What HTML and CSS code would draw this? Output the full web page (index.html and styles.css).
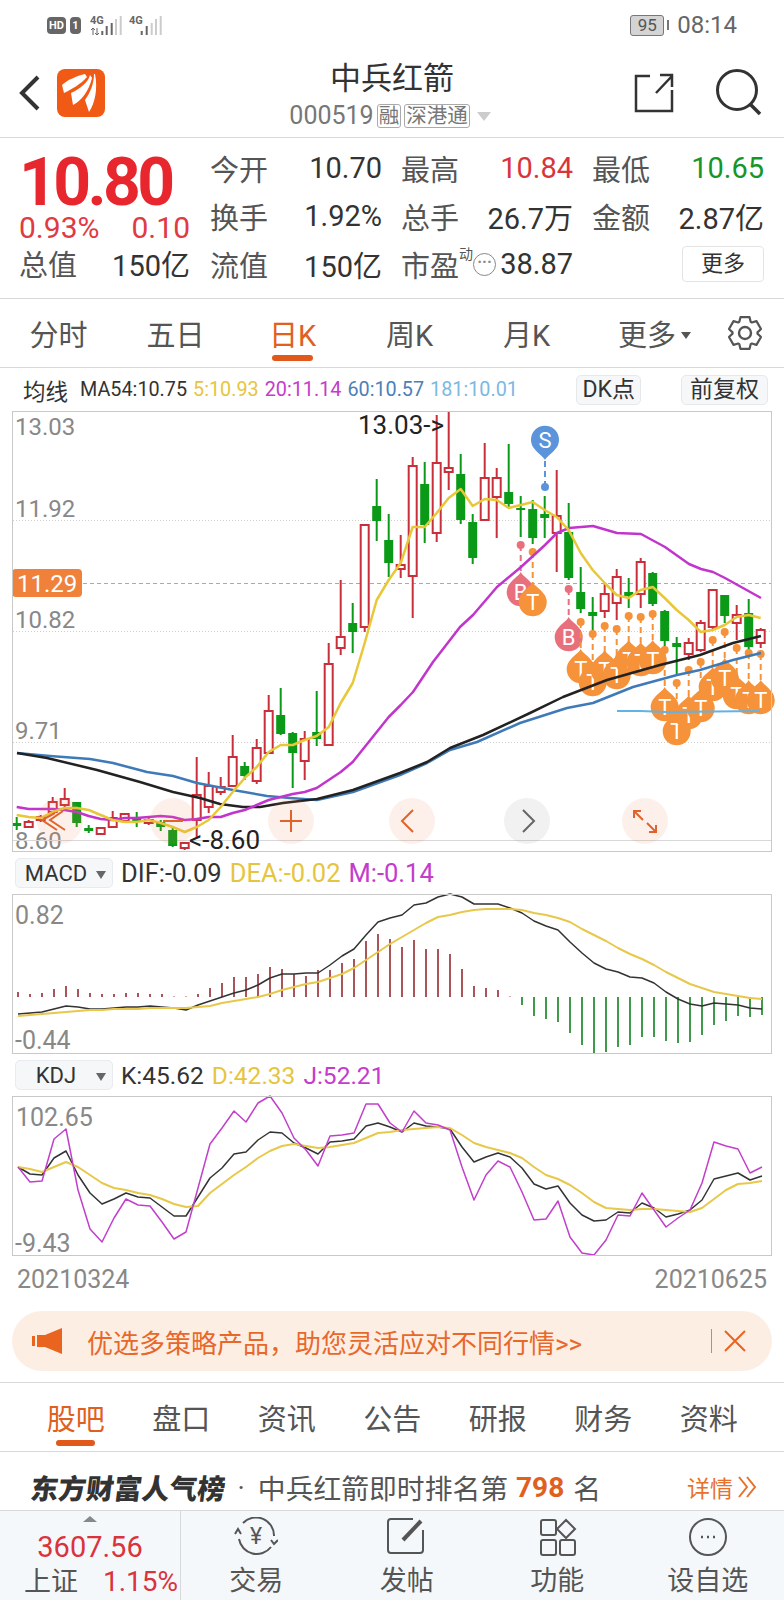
FILE: index.html
```html
<!DOCTYPE html>
<html lang="zh-CN">
<head>
  <meta charset="UTF-8" />
  <meta name="viewport" content="width=device-width, initial-scale=1.0"/>
  <title>中兵红箭 000519</title>
  <link rel="stylesheet" href="styles.css">
</head>
<body>

  <div class="status-bar">
    <span class="hd-badge">HD</span>
    <span class="sim-badge">1</span>
    <svg class="signal" width="33" height="20" viewBox="0 0 33 20">
      <text x="0" y="9" class="signal-text">4G</text>
      <path d="M3 13v7M1 15l2-2 2 2M7 13v7M5 18l2 2 2-2" fill="none" stroke="#666" stroke-width="1"/>
      <path d="M12.3 16v4M16.7 11v9M21.7 8v12" stroke="#666" stroke-width="2"/>
      <path d="M26 4v16M30.7 1v19" stroke="#ccc" stroke-width="2"/>
    </svg>
    <svg class="signal" width="34" height="20" viewBox="0 0 34 20">
      <text x="0" y="9" class="signal-text">4G</text>
      <path d="M12.7 16v4M17.7 11v9" stroke="#666" stroke-width="2"/>
      <path d="M22.7 8v12M27 4v16M31.7 1v19" stroke="#ccc" stroke-width="2"/>
    </svg>
    <div class="status-right">
      <span class="battery">95</span>
      <span class="battery-nub"></span>
      <span class="clock">08:14</span>
    </div>
  </div>

  <header class="top-bar">
    <div class="top-left">
      <svg width="24" height="38" viewBox="0 0 24 38"><path d="M20 3 4 19l16 16" fill="none" stroke="#333" stroke-width="4"/></svg>
      <svg class="logo" width="48" height="48" viewBox="0 0 48 48">
        <rect width="48" height="48" rx="8" fill="#f15a14"/>
        <path d="M28 5C20 7 10 11 5 16l2 8C15 20 24 15 30 8z" fill="#fff"/>
        <path d="M33 6C31 14 22 20 14 24l2 12C24 32 32 22 35 9z" fill="#fff"/>
        <path d="M37 5C37 15 33 24 28 31l4 12C38 34 41 20 38 5z" fill="#fff"/>
      </svg>
    </div>
    <div class="top-title">
      <div class="stock-name">中兵红箭</div>
      <div class="stock-code">
        000519<span class="code-tag">融</span><span class="code-tag">深港通</span><span class="code-arrow"></span>
      </div>
    </div>
    <div class="top-right">
      <svg width="40" height="40" viewBox="0 0 40 40"><path d="M16 3H2v35h36V17M22 20 38 3M26 2h12v12" fill="none" stroke="#333" stroke-width="2.5"/></svg>
      <svg width="48" height="48" viewBox="0 0 48 48"><circle cx="23" cy="21" r="19.5" fill="none" stroke="#333" stroke-width="3"/><path d="M36 35l10 10" stroke="#333" stroke-width="3.5"/></svg>
    </div>
  </header>

  <section class="quote">
    <div class="price-col">
      <div class="price">10.80</div>
      <div class="price-change"><span>0.93%</span><span>0.10</span></div>
      <div class="stat stat-total"><span class="stat-label">总值</span><span>150亿</span></div>
    </div>
    <div class="stats">
      <div class="stat"><span class="stat-label">今开</span><span>10.70</span></div>
      <div class="stat"><span class="stat-label">最高</span><span class="up">10.84</span></div>
      <div class="stat"><span class="stat-label">最低</span><span class="down">10.65</span></div>
      <div class="stat"><span class="stat-label">换手</span><span>1.92%</span></div>
      <div class="stat"><span class="stat-label">总手</span><span>26.7万</span></div>
      <div class="stat"><span class="stat-label">金额</span><span>2.87亿</span></div>
      <div class="stat"><span class="stat-label">流值</span><span>150亿</span></div>
      <div class="stat">
        <span class="stat-label pe-label">市盈<sup>动</sup></span>
        <span class="pe-dots">···</span>
        <span>38.87</span>
      </div>
      <div class="stat stat-btn"><span class="more-btn">更多</span></div>
    </div>
  </section>

  <nav class="period-tabs">
    <span>分时</span>
    <span>五日</span>
    <span class="active">日K</span>
    <span>周K</span>
    <span>月K</span>
    <span class="tab-more">更多<i class="tab-arrow"></i></span>
    <svg class="gear" width="36" height="36" viewBox="0 0 36 36">
      <path d="M12.33 6.86 13.45 2.14H22.55L23.67 6.86 24.81 7.52 29.46 6.13 34.01 14.01 30.48 17.35V18.65L34.01 21.99 29.46 29.87 24.81 28.48 23.67 29.14 22.55 33.86H13.45L12.33 29.14 11.19 28.48 6.54 29.87 1.99 21.99 5.52 18.65V17.35L1.99 14.01 6.54 6.13 11.19 7.52Z" fill="none" stroke="#555" stroke-width="2.2" stroke-linejoin="round"/>
      <circle cx="18" cy="18" r="6" fill="none" stroke="#555" stroke-width="2.4"/>
    </svg>
  </nav>

  <div class="ma-row">
    <span class="ma-title">均线</span>
    <span class="ma-item">MA54:10.75</span>
    <span class="ma-item c-yellow">5:10.93</span>
    <span class="ma-item c-purple">20:11.14</span>
    <span class="ma-item c-blue">60:10.57</span>
    <span class="ma-item c-sky">181:10.01</span>
    <span class="chip chip-dk">DK点</span>
    <span class="chip">前复权</span>
  </div>

  <svg id="kline" class="chart kline-chart" viewBox="12 411 760 441">
    <text x="15" y="435" class="axis">13.03</text>
    <text x="15" y="517" class="axis">11.92</text>
    <text x="15" y="628" class="axis">10.82</text>
    <text x="15" y="739" class="axis">9.71</text>
    <text x="15" y="849" class="axis">8.60</text>
  </svg>

  <div class="indicator-row macd-row">
    <span class="indicator-select">MACD<i class="select-arrow"></i></span>
    <span>DIF:-0.09</span>
    <span class="c-yellow">DEA:-0.02</span>
    <span class="c-purple">M:-0.14</span>
  </div>
  <svg id="macd" class="chart sub-chart" viewBox="12 894 760 160">
    <text x="15" y="924" class="axis axis-sub">0.82</text>
    <text x="15" y="1049" class="axis axis-sub">-0.44</text>
  </svg>

  <div class="indicator-row kdj-row">
    <span class="indicator-select">KDJ<i class="select-arrow"></i></span>
    <span>K:45.62</span>
    <span class="c-yellow">D:42.33</span>
    <span class="c-purple">J:52.21</span>
  </div>
  <svg id="kdj" class="chart sub-chart" viewBox="12 1096 760 160">
    <text x="16" y="1126" class="axis axis-sub">102.65</text>
    <text x="15" y="1252" class="axis axis-sub">-9.43</text>
  </svg>

  <div class="date-row">
    <span>20210324</span>
    <span>20210625</span>
  </div>

  <div class="promo">
    <svg width="32" height="28" viewBox="0 0 32 28">
      <path d="M0 9h3v10H0zM5 8h8L30 1v26L13 20H5z" fill="#e8641f"/>
    </svg>
    <span class="promo-text">优选多策略产品，助您灵活应对不同行情&gt;&gt;</span>
    <span class="promo-sep"></span>
    <svg width="24" height="24" viewBox="0 0 24 24"><path d="M2 2l20 20M22 2 2 22" stroke="#e8641f" stroke-width="2"/></svg>
  </div>

  <nav class="news-tabs">
    <span class="active">股吧</span>
    <span>盘口</span>
    <span>资讯</span>
    <span>公告</span>
    <span>研报</span>
    <span>财务</span>
    <span>资料</span>
  </nav>

  <div class="rank-row">
    <span class="rank-brand">东方财富人气榜</span>
    <span class="rank-dot">·</span>
    <span>中兵红箭即时排名第</span>
    <b class="rank-num">798</b>
    <span>名</span>
    <span class="rank-more">详情<svg width="20" height="24" viewBox="0 0 20 24"><path d="M2 2l8 10-8 10M10 2l8 10-8 10" fill="none" stroke="#e8702a" stroke-width="2"/></svg></span>
  </div>

  <footer class="bottom-bar">
    <div class="index-box">
      <i class="index-arrow"></i>
      <div class="index-value">3607.56</div>
      <div class="index-line"><span class="index-name">上证</span><span class="up">1.15%</span></div>
    </div>
    <div class="bottom-item">
      <svg width="44" height="42" viewBox="0 0 44 42">
        <path d="M9 6A18 18 0 0 1 40 19M37 30A18 18 0 0 1 5 22M37 23l3 4 4-4M1 17l3-5 3 5" fill="none" stroke="#555" stroke-width="2"/>
        <text x="22" y="27" class="icon-yen">¥</text>
      </svg>
      <span>交易</span>
    </div>
    <div class="bottom-item">
      <svg width="44" height="42" viewBox="0 0 44 42">
        <path d="M28 2H6a3 3 0 0 0-3 3v28a3 3 0 0 0 3 3h29a3 3 0 0 0 3-3V13" fill="none" stroke="#555" stroke-width="2"/>
        <path d="M18 23 36 4" stroke="#555" stroke-width="4"/>
      </svg>
      <span>发帖</span>
    </div>
    <div class="bottom-item">
      <svg width="44" height="42" viewBox="0 0 44 42" fill="none" stroke="#555" stroke-width="2">
        <rect x="6" y="3" width="15" height="15" rx="2"/>
        <path d="M31 3l9 9-9 9-9-9z"/>
        <rect x="6" y="23" width="15" height="15" rx="2"/>
        <rect x="25" y="23" width="15" height="15" rx="2"/>
      </svg>
      <span>功能</span>
    </div>
    <div class="bottom-item">
      <svg width="44" height="42" viewBox="0 0 44 42">
        <circle cx="22" cy="20" r="18" fill="none" stroke="#555" stroke-width="2"/>
        <path d="M15 20h2M21 20h2M27 20h2" stroke="#555" stroke-width="2.5"/>
      </svg>
      <span>设自选</span>
    </div>
  </footer>

  <script src="chart.js"></script>
</body>
</html>
```

FILE: styles.css
```css
body {
  font-family: Roboto, "Noto Sans CJK SC", sans-serif;
  background-color: #fff;
  color: #333;
  margin: 0;
  padding: 0;
  width: 784px;
  height: 1600px;
  overflow: hidden;
}
.up { color: #d9343c; }
.down { color: #14962a; }
.c-yellow { color: #e6c53e; }
.c-purple { color: #c43ccb; }
.c-blue { color: #4b80b8; }
.c-sky { color: #7cb9e2; }

/* status bar */
.status-bar {
  height: 50px;
  display: flex;
  align-items: center;
  padding: 0 47px 0 47px;
  box-sizing: border-box;
}
.hd-badge {
  background-color: #666;
  color: #fff;
  font-size: 11px;
  font-weight: bold;
  border-radius: 4px;
  width: 19px;
  height: 17px;
  line-height: 17px;
  text-align: center;
}
.sim-badge {
  background-color: #666;
  color: #fff;
  font-size: 11px;
  font-weight: bold;
  border-radius: 4px;
  width: 11px;
  height: 17px;
  line-height: 17px;
  text-align: center;
  margin-left: 4px;
}
.signal { margin-left: 9px; }
.signal + .signal { margin-left: 6px; }
.signal-text { font-size: 11px; font-weight: bold; fill: #666; }
.status-right {
  margin-left: auto;
  display: flex;
  align-items: center;
}
.battery {
  width: 32px;
  height: 19px;
  line-height: 19px;
  border: 1px solid #777;
  border-radius: 3px;
  background-color: #d4d4d4;
  color: #555;
  text-align: center;
  font-size: 17px;
}
.battery-nub {
  width: 2px;
  height: 10px;
  background-color: #777;
  margin-left: 3px;
}
.clock {
  font-size: 24px;
  color: #666;
  margin-left: 8px;
}

/* title bar */
.top-bar {
  height: 87px;
  border-bottom: 1px solid #d9d9d9;
  display: flex;
  align-items: flex-start;
}
.top-left {
  width: 150px;
  display: flex;
  align-items: center;
  padding: 19px 0 0 18px;
  box-sizing: border-box;
}
.logo { margin-left: 15px; }
.top-title {
  flex: 1;
  text-align: center;
}
.stock-name {
  font-size: 31px;
  line-height: 46px;
  margin-top: 6px;
}
.stock-code {
  font-size: 25px;
  line-height: 30px;
  margin-top: -1px;
  color: #777;
  display: flex;
  align-items: center;
  justify-content: center;
  padding-right: 4px;
}
.code-tag {
  font-size: 20.5px;
  line-height: 22px;
  border: 1px solid #aaa;
  border-radius: 3px;
  padding: 0 1px;
  margin-left: 3px;
}
.code-arrow {
  width: 0;
  height: 0;
  border-left: 7px solid transparent;
  border-right: 7px solid transparent;
  border-top: 9px solid #ccc;
  margin-left: 7px;
}
.top-right {
  width: 150px;
  display: flex;
  align-items: center;
  padding-top: 19px;
  box-sizing: border-box;
  gap: 40px;
}

/* quote block */
.quote {
  height: 154px;
  padding: 6px 20px 0 19px;
  border-bottom: 1px solid #d9d9d9;
  display: flex;
}
.price-col { width: 171px; }
.price {
  color: #e8262e;
  font-size: 66px;
  font-weight: bold;
  letter-spacing: -3.6px;
  line-height: 60px;
  height: 60px;
  margin-top: 9px;
  white-space: nowrap;
}
.price-change {
  color: #e03a42;
  font-size: 30px;
  line-height: 30px;
  height: 30px;
  display: flex;
  justify-content: space-between;
}
.stat-total { margin-top: -4px; }
.stats {
  margin-left: 20px;
  display: grid;
  grid-template-columns: repeat(3, 172px);
  grid-auto-rows: 48px;
  column-gap: 19px;
}
.stat {
  display: flex;
  align-items: center;
  justify-content: space-between;
  height: 48px;
  font-size: 29px;
  white-space: nowrap;
}
.stat-label {
  color: #555;
  font-size: 29px;
}
.pe-label sup {
  font-size: 14px;
  line-height: 0;
  vertical-align: 18px;
}
.pe-dots {
  width: 21px;
  height: 21px;
  line-height: 15px;
  font-size: 16px;
  font-weight: bold;
  border: 1px solid #888;
  border-radius: 50%;
  color: #888;
  text-align: center;
  margin-right: auto;
}
.stat-btn { justify-content: flex-end; }
.more-btn {
  font-size: 22px;
  line-height: 34px;
  width: 80px;
  text-align: center;
  border: 1px solid #e4e4e4;
  border-radius: 4px;
}

/* period tabs */
.period-tabs {
  height: 68px;
  border-bottom: 1px solid #d9d9d9;
  display: grid;
  grid-template-columns: repeat(6, 117px) 1fr;
  align-items: center;
  font-size: 29px;
  color: #555;
  text-align: center;
}
.period-tabs span { position: relative; }
.period-tabs .active {
  color: #e0601e;
}
.period-tabs .active::after {
  content: "";
  position: absolute;
  left: 38px;
  bottom: -7px;
  width: 41px;
  height: 6px;
  border-radius: 3px;
  background-color: #e0581a;
}
.tab-more { padding-left: 22px; }
.tab-arrow {
  display: inline-block;
  width: 0;
  height: 0;
  border-left: 5px solid transparent;
  border-right: 5px solid transparent;
  border-top: 7px solid #555;
  margin-left: 5px;
  vertical-align: 7px;
}
.gear { justify-self: center; margin-left: 4px; }

/* moving average row */
.ma-row {
  height: 43px;
  display: flex;
  align-items: center;
  padding: 0 16px 0 23px;
  box-sizing: border-box;
  white-space: nowrap;
}
.ma-title {
  font-size: 22.5px;
  margin-right: 12px;
}
.ma-item {
  font-size: 19.8px;
  margin-right: 6px;
}
.chip {
  font-size: 23px;
  line-height: 28px;
  padding: 0 8px;
  background-color: #f5f7f9;
  border: 1px solid #e6e9ec;
  border-radius: 5px;
}
.chip-dk {
  margin-left: auto;
  margin-right: 40px;
  padding: 0 5px;
}

/* charts */
.chart {
  display: block;
  margin-left: 12px;
  width: 760px;
  overflow: visible;
}
.kline-chart { height: 441px; }
.sub-chart { height: 160px; }
.axis {
  font-size: 24px;
  fill: #888;
}
.axis-sub { font-size: 25px; }
.axis-tag {
  font-size: 24px;
  fill: #fff;
}
.axis-note {
  font-size: 26px;
  fill: #222;
}
.pin-text {
  font-size: 22px;
  fill: #fff;
  text-anchor: middle;
}

/* indicator rows */
.indicator-row {
  height: 42px;
  padding-left: 15px;
  display: flex;
  align-items: center;
  gap: 8px;
  white-space: nowrap;
}
.macd-row { font-size: 25.5px; }
.kdj-row { font-size: 24.5px; }
.indicator-select {
  width: 98px;
  height: 30px;
  line-height: 30px;
  font-size: 22px;
  background-color: #f5f7f9;
  border: 1px solid #e8ecf0;
  border-radius: 5px;
  text-align: center;
  padding-right: 16px;
  box-sizing: border-box;
  position: relative;
}
.select-arrow {
  position: absolute;
  right: 6px;
  top: 12px;
  width: 0;
  height: 0;
  border-left: 5px solid transparent;
  border-right: 5px solid transparent;
  border-top: 8px solid #666;
}

/* dates and promo */
.date-row {
  height: 55px;
  padding: 4px 17px 0;
  box-sizing: border-box;
  display: flex;
  justify-content: space-between;
  font-size: 25px;
  line-height: 40px;
  color: #888;
}
.promo {
  margin-left: 12px;
  width: 760px;
  height: 60px;
  border-radius: 30px;
  background-color: #fdeee4;
  box-sizing: border-box;
  padding: 0 25px 0 20px;
  display: flex;
  align-items: center;
}
.promo-text {
  color: #e8682a;
  font-size: 26px;
  margin-left: 23px;
  white-space: nowrap;
}
.promo-sep {
  width: 1px;
  height: 24px;
  background-color: #c58a66;
  margin-left: auto;
  margin-right: 11px;
}

/* news tabs */
.news-tabs {
  margin-top: 11px;
  height: 68px;
  border-top: 1px solid #d9d9d9;
  border-bottom: 1px solid #d9d9d9;
  display: grid;
  grid-template-columns: repeat(7, 105.5px);
  padding-left: 23px;
  align-items: center;
  text-align: center;
  font-size: 29px;
  color: #555;
}
.news-tabs .active {
  color: #e0601e;
  position: relative;
}
.news-tabs .active::after {
  content: "";
  position: absolute;
  left: 33px;
  bottom: -8px;
  width: 39px;
  height: 6px;
  border-radius: 3px;
  background-color: #e0581a;
}

/* ranking row */
.rank-row {
  height: 58px;
  display: flex;
  align-items: center;
  padding: 12px 27px 0 31px;
  box-sizing: border-box;
  font-size: 27.8px;
  color: #555;
  white-space: nowrap;
}
.rank-brand {
  font-weight: 900;
  color: #333;
  transform: skewX(-7deg);
}
.rank-dot { margin: 0 13px 0 12px; }
.rank-num {
  color: #e0601e;
  font-size: 28px;
  margin: 0 9px 0 8px;
}
.rank-more {
  margin-left: auto;
  color: #e8702a;
  font-size: 23px;
  display: flex;
  align-items: center;
  gap: 4px;
}

/* bottom bar */
.bottom-bar {
  height: 90px;
  background-color: #f5f8fa;
  border-top: 1px solid #d9d9d9;
  box-sizing: border-box;
  display: grid;
  grid-template-columns: 181px repeat(4, 150.5px);
  color: #555;
}
.index-box {
  border-right: 1px solid #d9d9d9;
  position: relative;
  text-align: center;
}
.index-arrow {
  position: absolute;
  left: 83px;
  top: 5px;
  width: 0;
  height: 0;
  border-left: 7px solid transparent;
  border-right: 7px solid transparent;
  border-bottom: 6px solid #888;
}
.index-value {
  color: #d9343c;
  font-size: 29px;
  line-height: 36px;
  margin-top: 18px;
}
.index-line {
  font-size: 28px;
  line-height: 34px;
  display: flex;
  justify-content: space-between;
  padding: 0 2px 0 24px;
}
.index-name { font-size: 27px; }
.bottom-item {
  display: flex;
  flex-direction: column;
  align-items: center;
  font-size: 27px;
  line-height: 38px;
}
.bottom-item svg { margin-top: 6px; margin-bottom: 3px; }
.icon-yen {
  font-size: 23px;
  fill: #555;
  text-anchor: middle;
}
```

FILE: chart.js
```js
const NS = "http://www.w3.org/2000/svg";
const RED = "#c92f3a";
const GREEN = "#0a9a18";
const ORANGE = "#f5923a";
const PINK = "#e8707c";

function add(svg, tag, attrs, text) {
  const node = document.createElementNS(NS, tag);
  for (const key in attrs) node.setAttribute(key, attrs[key]);
  if (text) node.textContent = text;
  svg.appendChild(node);
  return node;
}

function line(svg, pts, color, width) {
  add(svg, "polyline", {
    points: pts.map(p => p.join(",")).join(" "),
    fill: "none",
    stroke: color,
    "stroke-width": width,
    "stroke-linejoin": "round"
  });
}

function frame(svg, x, y, w, h) {
  add(svg, "rect", { x: x + 0.5, y: y + 0.5, width: w - 1, height: h - 1, fill: "none", stroke: "#c9c9c9" });
}

// ---- main k-line chart ----
// up/down, body top, body bottom, wick top, wick bottom
const candles = [
  ["g",823,826,817,830],["r",822,827,820,828],["r",817,820,815,822],["r",802,812,797,813],
  ["r",799,805,788,808],["g",802,823,802,827],["g",828,831,825,833],["r",828,834,827,835],
  ["r",818,827,811,827],["r",814,821,813,823],["g",818,821,812,827],["r",820,823,818,825],
  ["g",822,827,820,831],["g",830,846,828,847],["r",843,848,843,850],["r",795,820,757,837],
  ["r",786,807,772,813],["r",787,792,777,795],["r",757,786,735,787],["g",766,776,762,780],
  ["r",748,781,739,784],["r",711,753,695,753],["g",715,734,688,735],["g",733,753,732,788],
  ["r",739,761,731,780],["g",732,739,691,746],["r",664,745,643,746],["r",637,648,580,655],
  ["g",623,632,603,653],["r",525,627,525,632],["g",506,521,479,541],["g",540,563,514,577],
  ["r",565,569,535,578],["r",466,576,457,618],["g",484,525,462,543],["r",463,533,415,542],
  ["r",468,472,411,490],["g",474,520,454,524],["g",522,558,514,564],["r",478,520,443,520],
  ["r",478,497,468,538],["g",492,504,444,507],["g",508,510,496,537],["g",509,538,500,544],
  ["g",514,518,496,538],["r",516,533,470,572],["g",532,578,503,580],["g",592,609,567,613],
  ["g",612,616,597,637],["r",594,611,584,618],["r",577,603,569,620],["g",592,596,578,608],
  ["r",562,594,558,608],["g",573,604,572,606],["g",611,641,610,650],["g",643,647,637,675],
  ["r",643,654,638,660],["r",623,650,620,652],["r",590,627,590,630],["g",595,616,595,623],
  ["r",615,623,605,640],["g",613,647,599,650],["r",630,643,628,648]
];

const ma5 = [815,817,818,812,808,808,810,815,820,822,822,820,823,827,832,827,820,807,792,778,767,752,745,745,740,736,727,703,683,643,600,580,563,527,527,513,498,489,506,499,500,508,505,502,510,517,530,553,570,583,595,598,590,587,598,610,620,632,630,625,617,615,618];
const ma20Head = [807,809,809,809,810,812,816,819,820,818,818,817,816,817,820,819,817,817,813,810,805,800,797,794,792,788,780,772,762,747,732,717,705];
const ma20Tail = [[413,692],[433,662],[450,640],[460,627],[473,615],[497,587],[521,567],[545,545],[557,533],[569,528],[593,526],[617,533],[641,534],[665,547],[689,564],[701,569],[713,572],[725,578],[761,598]];
const ma54 = [[17,753],[47,758],[97,770],[140,782],[173,792],[200,798],[220,804],[243,807],[260,807],[283,803],[317,799],[353,790],[400,773],[427,762],[450,748],[483,735],[530,713],[563,697],[607,680],[660,665],[700,655],[733,643],[761,636]];
const ma60 = [[17,753],[50,756],[90,759],[113,763],[147,772],[173,776],[197,783],[233,790],[267,796],[290,798],[317,800],[353,792],[400,775],[427,763],[450,750],[477,742],[520,723],[567,708],[593,703],[633,687],[677,675],[700,670],[733,660],[761,653]];
const ma181 = [[617,711],[640,711],[667,712],[760,711]];

// candle index, dot y, head y, letter
const pins = [
  [42,545,592,"B"],[43,552,602,"T"],[46,589,637,"B"],
  [47,622,669,"T"],[48,634,682,"T"],[49,626,670,"T"],[50,629,675,"T"],[51,616,660,"T"],
  [52,617,662,"T"],[53,614,660,"T"],[54,650,707,"T"],[55,683,731,"T"],[56,670,715,"T"],
  [57,662,708,"T"],[58,640,687,"T"],[59,632,678,"T"],[60,648,695,"T"],[61,653,700,"T"],
  [62,654,700,"T"]
];

function candleX(i) { return 16.7 + 12 * i; }

function drawPin(svg, x, dotY, headY, letter, color) {
  add(svg, "line", { x1: x, y1: dotY, x2: x, y2: headY, stroke: color, "stroke-width": 2, "stroke-dasharray": "6 4" });
  add(svg, "circle", { cx: x, cy: dotY, r: 4, fill: color });
  const s = headY > dotY ? -1 : 1;
  const y = headY;
  add(svg, "path", {
    d: `M${x} ${y + s * 20}C${x + 2} ${y + s * 16} ${x + 8} ${y + s * 13} ${x + 12} ${y + s * 7}` +
       `A14 14 0 1 ${s < 0 ? 1 : 0} ${x - 12} ${y + s * 7}C${x - 8} ${y + s * 13} ${x - 2} ${y + s * 16} ${x} ${y + s * 20}Z`,
    fill: color
  });
  add(svg, "text", { x: x, y: headY + 8, class: "pin-text" }, letter);
}

function drawKline() {
  const svg = document.getElementById("kline");
  [520, 631, 742].forEach(y => {
    add(svg, "line", { x1: 13, y1: y + 0.5, x2: 771, y2: y + 0.5, stroke: "#cfcfcf", "stroke-dasharray": "1 2" });
  });
  add(svg, "line", { x1: 13, y1: 840.5, x2: 771, y2: 840.5, stroke: "#d8d8d8" });
  add(svg, "line", { x1: 13, y1: 583.5, x2: 771, y2: 583.5, stroke: "#d99a80", "stroke-dasharray": "4 3" });

  candles.forEach((c, i) => {
    const x = candleX(i);
    const color = c[0] === "r" ? RED : GREEN;
    add(svg, "line", { x1: x, y1: c[3], x2: x, y2: c[4], stroke: color, "stroke-width": 2 });
    if (c[0] === "r") {
      add(svg, "rect", { x: x - 4, y: c[1], width: 8, height: c[2] - c[1], fill: "#fff", stroke: color, "stroke-width": 2 });
    } else {
      add(svg, "rect", { x: x - 4.5, y: c[1], width: 9, height: c[2] - c[1], fill: color });
    }
  });

  // S marker points down, the rest point up
  drawPin(svg, 545, 487, 440, "S", "#5b94da");
  pins.forEach(p => {
    drawPin(svg, candleX(p[0]), p[1], p[2], p[3], p[3] === "B" ? PINK : ORANGE);
  });

  line(svg, ma60, "#3f7ab8", 2.5);
  line(svg, ma54, "#222", 2.5);
  line(svg, ma181, "#62b2e4", 2);
  line(svg, ma20Head.map((y, i) => [candleX(i), y]).concat(ma20Tail), "#c235cc", 2.5);
  line(svg, ma5.map((y, i) => [candleX(i), y]), "#e8c838", 2.5);

  add(svg, "text", { x: 358, y: 434, class: "axis-note" }, "13.03->");
  add(svg, "text", { x: 189, y: 849, class: "axis-note" }, "<-8.60");

  // current price tag
  add(svg, "rect", { x: 12, y: 569, width: 70, height: 28, rx: 4, fill: "#f0813a" });
  add(svg, "text", { x: 17, y: 592, class: "axis-tag" }, "11.29");

  // floating chart controls
  [[60, "#f08050"], [173, "#f08050"], [291, "#f08050"], [412, "#f08050"], [527, "#888"], [645, "#f08050"]].forEach(b => {
    add(svg, "circle", { cx: b[0], cy: 821, r: 23, fill: b[1], opacity: 0.12 });
  });
  const icon = { fill: "none", stroke: "#e0642a", "stroke-width": 2 };
  add(svg, "path", Object.assign({ d: "M55 813l-13 7 15 10M63 811l-13 9 15 10" }, icon));
  add(svg, "path", Object.assign({ d: "M163 821h20" }, icon));
  add(svg, "path", Object.assign({ d: "M280 821h22M291 810v22" }, icon));
  add(svg, "path", Object.assign({ d: "M413 810l-11 11 11 11" }, icon));
  add(svg, "path", Object.assign({ d: "M523 810l11 11-11 11" }, icon, { stroke: "#666" }));
  add(svg, "path", Object.assign({ d: "M634 818v-7h7M634 811l9 9M656 825v7h-7M656 832l-9-9" }, icon));

  frame(svg, 12, 411, 760, 441);
}

// ---- MACD ----
const macdBars = [5,3,4,8,11,8,4,3,3,4,4,3,3,0.5,0.5,3,9,14,20,20,23,30,28,23,21,27,27,34,38,56,63,58,50,57,48,48,43,28,11,9,7,0.5,-8,-19,-22,-25,-36,-48,-56,-55,-50,-48,-40,-40,-44,-46,-45,-38,-28,-24,-19,-20,-18];
const dif = [1014,1013,1012,1009,1006,1007,1009,1009,1008,1007,1007,1006,1007,1008,1010,1005,1001,997,993,990,985,978,974,974,973,973,965,956,949,935,922,918,915,905,903,897,894,897,904,904,904,908,913,921,926,930,942,953,963,969,972,977,978,983,992,999,1004,1006,1003,1004,1005,1008,1009];
const dea = [1016,1015,1014,1013,1012,1011,1010,1010,1009,1009,1009,1008,1008,1008,1008,1007,1006,1003,1001,999,997,994,990,987,984,982,978,974,968,960,952,944,937,930,923,917,915,912,910,909,909,909,910,913,915,918,922,929,935,941,948,954,959,965,972,978,984,988,992,994,996,998,999];

function subX(i) { return 18 + 12 * i; }

function drawMacd() {
  const svg = document.getElementById("macd");
  macdBars.forEach((h, i) => {
    const x = subX(i);
    add(svg, "line", { x1: x, y1: 997, x2: x, y2: 997 - h, stroke: h > 0 ? "#a85458" : "#3f9a4c", "stroke-width": 2 });
  });
  line(svg, dif.map((y, i) => [subX(i), y]), "#333", 1.5);
  line(svg, dea.map((y, i) => [subX(i), y]), "#e8c84a", 2);
  frame(svg, 12, 894, 760, 160);
}

// ---- KDJ ----
const kLine = [1167,1174,1175,1158,1151,1175,1193,1204,1199,1193,1197,1198,1207,1216,1216,1197,1178,1168,1154,1152,1140,1132,1133,1143,1148,1154,1142,1141,1139,1126,1123,1127,1132,1123,1126,1127,1129,1147,1162,1157,1153,1157,1168,1184,1189,1186,1203,1215,1221,1220,1212,1213,1203,1208,1217,1214,1210,1200,1179,1176,1173,1180,1176];
const dLine = [1167,1169,1172,1167,1162,1167,1175,1183,1188,1190,1193,1195,1199,1204,1207,1206,1193,1184,1175,1167,1158,1151,1146,1144,1146,1148,1147,1145,1143,1138,1133,1132,1130,1129,1128,1127,1128,1135,1143,1147,1150,1153,1158,1167,1175,1179,1185,1193,1202,1208,1209,1210,1209,1209,1210,1211,1212,1208,1199,1190,1184,1183,1181];
const jLine = [1167,1182,1181,1139,1129,1190,1229,1242,1218,1199,1205,1206,1222,1239,1232,1188,1144,1128,1111,1122,1103,1096,1113,1138,1150,1166,1136,1135,1133,1104,1104,1123,1132,1111,1123,1125,1130,1167,1200,1175,1161,1167,1192,1220,1219,1201,1237,1253,1255,1240,1215,1216,1193,1210,1227,1218,1210,1183,1142,1146,1149,1173,1167];

function drawKdj() {
  const svg = document.getElementById("kdj");
  line(svg, kLine.map((y, i) => [subX(i), y]), "#333", 1.5);
  line(svg, dLine.map((y, i) => [subX(i), y]), "#e8c84a", 2);
  line(svg, jLine.map((y, i) => [subX(i), y]), "#c23fcb", 1.5);
  frame(svg, 12, 1096, 760, 160);
}

drawKline();
drawMacd();
drawKdj();
```
